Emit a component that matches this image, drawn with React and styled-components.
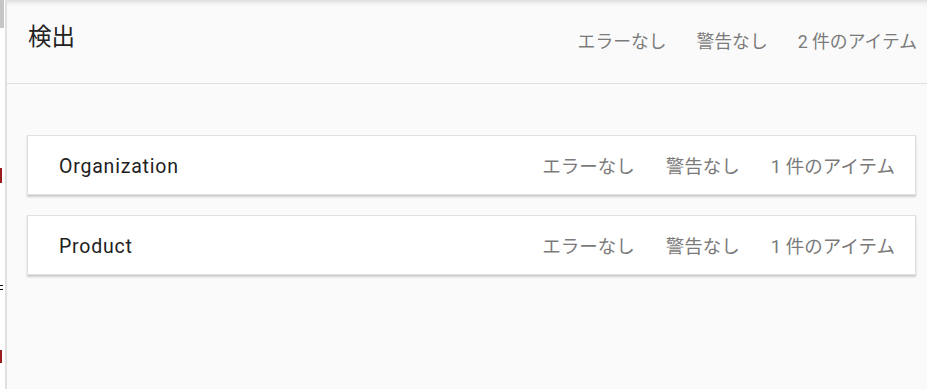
import React from "react";
import styled, { createGlobalStyle } from "styled-components";

const Global = createGlobalStyle`
  html, body { margin: 0; padding: 0; background: #fafafa; }
  body { font-family: Roboto, "Noto Sans CJK JP", sans-serif; width: 927px; height: 389px; overflow: hidden; }
`;

const Layout = styled.div`
  display: flex;
  height: 389px;
`;

const SideStrip = styled.div`
  width: 5px;
  flex: none;
  background: #ffffff;
  border-right: 2px solid #e0e0e0;
  position: relative;
  overflow: hidden;
`;

const Thumb = styled.div`
  position: absolute;
  left: 0;
  top: 0;
  width: 4px;
  height: 28px;
  background: #c6c6c6;
`;

/* clipped fragments of the neighbouring panel's glyphs */
const Fragment = styled.div`
  position: absolute;
  left: 0;
  top: ${(p) => p.$top}px;
  width: ${(p) => p.$w}px;
  height: ${(p) => p.$h}px;
  background: ${(p) => p.$color};
`;

const Main = styled.div`
  flex: 1;
  display: flex;
  flex-direction: column;
  background: #fafafa;
  box-shadow: inset 0 7px 6px -6px rgba(0, 0, 0, 0.18);
`;

const Header = styled.header`
  height: 84px;
  flex: none;
  display: flex;
  align-items: center;
  justify-content: space-between;
  padding: 0 10px 3px 21px;
  box-sizing: border-box;
  border-bottom: 1px solid #e0e0e0;
`;

const Title = styled.h1`
  margin: 0 0 10px;
  font-family: "Noto Sans CJK JP", sans-serif;
  font-weight: 400;
  font-size: 23.5px;
  color: #212121;
`;

const Stats = styled.div`
  display: flex;
  align-items: center;
  gap: ${(p) => (p.$large ? 31 : 30)}px;
`;

const Stat = styled.span`
  font-family: Roboto, "Noto Sans CJK JP", sans-serif;
  font-size: ${(p) => (p.$large ? 18.5 : 17.8)}px;
  color: #7a7a7a;
  white-space: nowrap;
`;

const Content = styled.div`
  display: flex;
  flex-direction: column;
  gap: 20px;
  padding: 51px 11px 0 20px;
`;

const Card = styled.div`
  height: 60px;
  box-sizing: border-box;
  background: #ffffff;
  border: 1px solid #e0e0e0;
  box-shadow: 0 2px 2px rgba(0, 0, 0, 0.18);
  display: flex;
  align-items: center;
  justify-content: space-between;
  padding: 0 20px 0 31px;
`;

const Name = styled.span`
  font-family: Roboto, sans-serif;
  font-size: 19.5px;
  letter-spacing: 0.8px;
  color: #212121;
  margin-top: 2px;
`;

const StatGroup = ({ count, large }) => (
  <Stats $large={large}>
    <Stat $large={large}>エラーなし</Stat>
    <Stat $large={large}>警告なし</Stat>
    <Stat $large={large}>{count} 件のアイテム</Stat>
  </Stats>
);

const items = ["Organization", "Product"];

export default function App() {
  return (
    <>
      <Global />
      <Layout>
        <SideStrip>
          <Thumb />
          <Fragment $top={168} $w={2} $h={15} $color="#9b1c1c" />
          <Fragment $top={285} $w={3} $h={1} $color="#111" />
          <Fragment $top={289} $w={3} $h={1} $color="#111" />
          <Fragment $top={350} $w={2} $h={13} $color="#9b1c1c" />
        </SideStrip>
        <Main>
          <Header>
            <Title>検出</Title>
            <StatGroup count={2} />
          </Header>
          <Content>
            {items.map((n) => (
              <Card key={n}>
                <Name>{n}</Name>
                <StatGroup count={1} large />
              </Card>
            ))}
          </Content>
        </Main>
      </Layout>
    </>
  );
}
